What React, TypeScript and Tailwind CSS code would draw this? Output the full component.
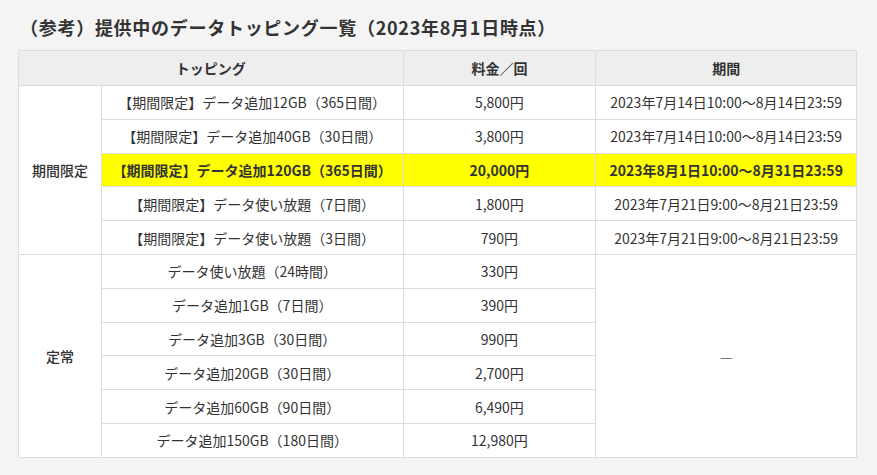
const limited = [
  { name: "【期間限定】データ追加12GB（365日間）", price: "5,800円", period: "2023年7月14日10:00〜8月14日23:59" },
  { name: "【期間限定】データ追加40GB（30日間）", price: "3,800円", period: "2023年7月14日10:00〜8月14日23:59" },
  { name: "【期間限定】データ追加120GB（365日間）", price: "20,000円", period: "2023年8月1日10:00〜8月31日23:59", hot: true },
  { name: "【期間限定】データ使い放題（7日間）", price: "1,800円", period: "2023年7月21日9:00〜8月21日23:59" },
  { name: "【期間限定】データ使い放題（3日間）", price: "790円", period: "2023年7月21日9:00〜8月21日23:59" },
]

const regular = [
  { name: "データ使い放題（24時間）", price: "330円" },
  { name: "データ追加1GB（7日間）", price: "390円" },
  { name: "データ追加3GB（30日間）", price: "990円" },
  { name: "データ追加20GB（30日間）", price: "2,700円" },
  { name: "データ追加60GB（90日間）", price: "6,490円" },
  { name: "データ追加150GB（180日間）", price: "12,980円" },
]

const cell = "border border-[#dddddd] text-center align-middle px-2"

const App = () => {
  return (
    <div
      className="min-h-screen bg-[#f4f4f4] text-[#333333] px-[18px] pt-[14px]"
      style={{ fontFamily: '"Noto Sans CJK JP", "Noto Sans", sans-serif' }}
    >
      <h2 className="text-[18px] font-bold tracking-[0.04em] leading-[26px] pl-[2px] mb-[10px]">
        （参考）提供中のデータトッピング一覧（2023年8月1日時点）
      </h2>
      <table className="w-[839px] border-collapse bg-white text-[14px] leading-[20px]">
        <colgroup>
          <col className="w-[83px]" />
          <col className="w-[302px]" />
          <col className="w-[193px]" />
          <col className="w-[261px]" />
        </colgroup>
        <thead>
          <tr className="h-[35px] bg-[#eeeeee] font-bold">
            <th colSpan={2} className={cell}>トッピング</th>
            <th className={cell}>料金／回</th>
            <th className={cell}>期間</th>
          </tr>
        </thead>
        <tbody>
          {limited.map((item, idx) => (
            <tr key={idx} className={item.hot ? "h-[33.8px] bg-[#ffff00] font-bold" : "h-[33.8px]"}>
              {idx == 0 && (
                <td rowSpan={limited.length} className={`${cell} bg-white font-medium`}>期間限定</td>
              )}
              <td className={cell}>{item.name}</td>
              <td className={cell}>{item.price}</td>
              <td className={cell}>{item.period}</td>
            </tr>
          ))}
          {regular.map((item, idx) => (
            <tr key={idx} className="h-[33.8px]">
              {idx == 0 && (
                <td rowSpan={regular.length} className={`${cell} font-medium`}>定常</td>
              )}
              <td className={cell}>{item.name}</td>
              <td className={cell}>{item.price}</td>
              {idx == 0 && (
                <td rowSpan={regular.length} className={`${cell} text-[#777777]`}>—</td>
              )}
            </tr>
          ))}
        </tbody>
      </table>
    </div>
  )
}

export default App
